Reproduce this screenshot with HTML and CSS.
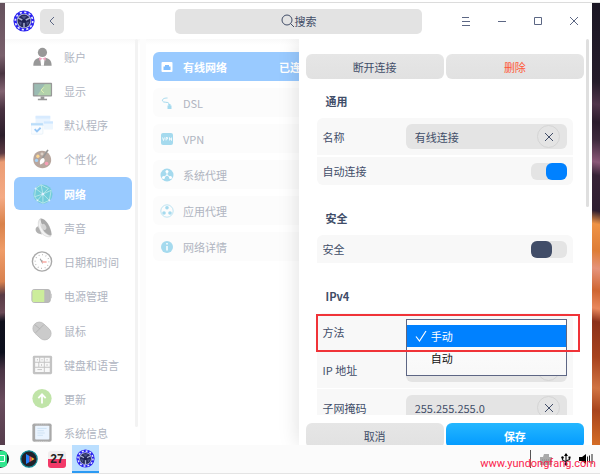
FILE: index.html
```html
<!DOCTYPE html>
<html lang="zh-CN">
<head>
    <meta charset="UTF-8">
    <meta name="viewport" content="width=device-width, initial-scale=1.0">
    <title>控制中心</title>
    <link rel="stylesheet" href="styles.css">
</head>
<body>

<svg class="sprite" aria-hidden="true">
    <symbol id="logo" viewBox="0 0 24 24">
        <circle cx="12" cy="12" r="11.5" fill="#2a22f0"/>
        <circle cx="12" cy="12" r="9.5" fill="none" stroke="#e6e9ff" stroke-width="1.8" stroke-dasharray="2.4 2.57"/>
        <circle cx="12" cy="12" r="8" fill="#b9c0da"/>
        <circle cx="12" cy="12" r="7" fill="#262a5c"/>
        <path d="M12 12 5.500 8.500M12 12l6.500-3.500M12 12v7" stroke="#aab2d0" stroke-width="1.600"/>
        <path d="M9 6.500h6l-3 3.500zM6 12.500l3.500 1-1 3.500zM18 12.500l-3.500 1 1 3.500z" fill="#4b5388"/>
        <circle cx="12" cy="12" r="2.300" fill="#1c2050"/>
    </symbol>
    <symbol id="cross" viewBox="0 0 10 10">
        <path d="M1 1l8 8M9 1l-8 8" fill="none" stroke="currentColor" stroke-width="1"/>
    </symbol>
</svg>

<div class="desktop">
    <div class="wallpaper wallpaper-left"></div>

    <div class="window">
        <header class="titlebar">
            <div class="titlebar-left">
                <svg class="logo"><use href="#logo"/></svg>
                <button class="back" aria-label="返回">
                    <svg width="6" height="10" viewBox="0 0 6 10"><path d="M5 1 1 5l4 4" fill="none" stroke="currentColor"/></svg>
                </button>
            </div>
            <button class="search">
                <svg width="14" height="14" viewBox="0 0 14 14"><circle cx="6" cy="6" r="5" fill="none" stroke="currentColor"/><path d="M9.500 9.500 13 13" stroke="currentColor"/></svg>
                搜索
            </button>
            <div class="titlebar-right">
                <button aria-label="菜单"><svg width="10" height="10" viewBox="0 0 10 10"><path d="M1 1.500h7M1 5.500h8M1 9.500h8" stroke="currentColor"/></svg></button>
                <button aria-label="最小化"><svg width="10" height="10" viewBox="0 0 10 10"><path d="M1 5.500h8" stroke="currentColor"/></svg></button>
                <button aria-label="最大化"><svg width="10" height="10" viewBox="0 0 10 10"><path d="M1.500 1.500h7v7h-7z" fill="none" stroke="currentColor"/></svg></button>
                <button aria-label="关闭"><svg width="10" height="10"><use href="#cross"/></svg></button>
            </div>
        </header>

        <div class="main">
            <nav class="sidebar">
                <a href="#" class="nav-item">
                    <svg viewBox="0 0 24 24"><circle cx="12.500" cy="7" r="5" fill="#333"/><path d="M2.500 21.500c0-6 3-8 6-8.500h8c3 .5 6 2.500 6 8.500z" fill="#333"/><path d="M10 13h5l-1 8.500h-3z" fill="#fff"/><path d="m9 12 3.500 2 3.500-2v4l-3.500-2L9 16z" fill="#e8508a"/></svg>
                    账户
                </a>
                <a href="#" class="nav-item">
                    <svg viewBox="0 0 24 24"><rect x="2" y="3" width="21" height="15" rx="1" fill="#333"/><path d="M3.500 4.500h18v12h-18z" fill="#397a68"/><path d="M7 16.500 15 4.500h6.500v12z" fill="#67a75a"/><path d="m14 8-3 3 3 3" fill="none" stroke="#cde86a"/><path d="M10.500 18h4v2.500h3V22h-10v-1.500h3z" fill="#333"/></svg>
                    显示
                </a>
                <a href="#" class="nav-item">
                    <svg viewBox="0 0 24 24"><rect x="5" y="2" width="16" height="11" rx="1" fill="#d5eaff"/><path d="M5 2h16v3H5z" fill="#b3d9ff"/><rect x="14" y="8" width="10" height="9" rx="1" fill="#dceefe"/><path d="M14 8h10v2.500H14z" fill="#a0d0ff"/><rect x="0" y="10" width="13" height="12" rx="1" fill="#f5faff" stroke="#b5d2ea" stroke-width=".5"/><path d="M0 10h13v2.500H0z" fill="#77bdf6"/><path d="m4 16.500 2.500 2.500 4-4" fill="none" stroke="#3191ef" stroke-width="2"/></svg>
                    默认程序
                </a>
                <a href="#" class="nav-item">
                    <svg viewBox="0 0 24 24"><path d="M12 3C6 3 2.500 7 2.500 12.500S7 22 12.500 22 22 18 22 13 18 3 12 3z" fill="#72503f"/><circle cx="7.500" cy="9" r="1.800" fill="#ffb32b"/><circle cx="12" cy="6.500" r="1.600" fill="#b9a391"/><circle cx="6" cy="13.500" r="1.800" fill="#50a4ed"/><circle cx="17" cy="17" r="2" fill="#ee4070"/><path d="m18.500 2-6.500 10" stroke="#333" stroke-width="1.800"/><path d="M13.500 11c3 2 1 6-3.500 7-1-3 0-6.500 3.500-7z" fill="#fff"/></svg>
                    个性化
                </a>
                <a href="#" class="nav-item active">
                    <svg viewBox="0 0 24 24"><circle cx="13" cy="12" r="10.500" fill="#62cdca"/><path d="m5 6 8 6 9-4M4 15l9-3-2-10 8 4-6 6 7 7-7 3V12l-6 7-3-4 1-9 6-4M7 19l6 3M20 19l2-11" fill="none" stroke="#c4f3df" stroke-width="1"/><g fill="#fff"><circle cx="13" cy="12" r="1.500"/><circle cx="5" cy="6" r="1"/><circle cx="20" cy="19" r="1"/><circle cx="7" cy="19" r="1"/></g></svg>
                    网络
                </a>
                <a href="#" class="nav-item">
                    <svg viewBox="0 0 24 24"><path d="M10 2C15 0 22 11 22.500 19c-1 3-5 2-8 0z" fill="#555"/><path d="M10 2C7 4 7 12 12 18c3 3 8 5 10 2.500C14 19 9 10 10 2z" fill="#e9e9e9" stroke="#999" stroke-width=".6"/><path d="M8 10c-4 1-4 6 0 8l4 1-4-8z" fill="#666"/><ellipse cx="14.500" cy="11" rx="2.500" ry="3.500" transform="rotate(-30 14 12)" fill="#aaa"/></svg>
                    声音
                </a>
                <a href="#" class="nav-item">
                    <svg viewBox="0 0 24 24"><circle cx="12" cy="11.500" r="10.500" fill="#fff" stroke="#555" stroke-width="1.500"/><circle cx="12" cy="11.500" r="7.500" fill="none" stroke="#555" stroke-width="1.200" stroke-dasharray=".8 3.127"/><path d="M10 8.500 12 12v-2" fill="none" stroke="#444" stroke-width="1.300"/><path d="M12 12h5" stroke="#f04a3c" stroke-width="1.500"/></svg>
                    日期和时间
                </a>
                <a href="#" class="nav-item">
                    <svg viewBox="0 0 24 24"><rect x="1" y="5" width="20" height="14" rx="2.500" fill="#777" stroke="#666"/><path d="M2.500 5.500h12v13h-12a1 1 0 0 1-1-1v-11a1 1 0 0 1 1-1z" fill="#9bdc3a"/><path d="M21.500 9.500h1v5h-1z" fill="#777"/></svg>
                    电源管理
                </a>
                <a href="#" class="nav-item">
                    <svg viewBox="0 0 24 24"><rect x="1" y="5" width="22" height="14" rx="7" transform="rotate(43 12 12)" fill="#999" stroke="#777" stroke-width=".8"/><path d="m5 14 9-9M4 5l6 5" fill="none" stroke="#666"/></svg>
                    鼠标
                </a>
                <a href="#" class="nav-item">
                    <svg viewBox="0 0 24 24"><rect x="2" y="2" width="21" height="20" rx="1.500" fill="#888"/><path d="M4.500 4h4.500v4.500H4.500zM10 4h4v4.500h-4zM15 4h5.500v4.500H15zM4.500 9.500H8V14H4.500zM9 9.500h5V14H9zM15 9.500h5.500V14H15zM4.500 15h9.500v4.500H4.500zM15 15h5.500v4.500H15z" fill="#f2f2f2"/><path d="M7 5.500v1.500M12 5.500v1.500M17.500 5.500v1.500M11.500 11v2M17.500 11v2M7 17h5" stroke="#888"/></svg>
                    键盘和语言
                </a>
                <a href="#" class="nav-item">
                    <svg viewBox="0 0 24 24"><circle cx="12" cy="11.500" r="10.500" fill="#82ca54"/><path d="M12 17V7M8 11l4-4 4 4" fill="none" stroke="#fff" stroke-width="2"/></svg>
                    更新
                </a>
                <a href="#" class="nav-item">
                    <svg viewBox="0 0 24 24"><rect x="1.500" y="1.500" width="21" height="20" rx="2" fill="#555"/><path d="M5 2h14M5 21.500h14" stroke="#bbb" stroke-dasharray="1 1"/><rect x="4.500" y="4" width="15.500" height="15" rx="1" fill="#d6eaff"/><path d="M7 7h10M7 9.500h7M7 12h8M7 14.500h6" stroke="#8bbbe4" stroke-width=".8"/></svg>
                    系统信息
                </a>
            </nav>
            <div class="sidebar-scroll"></div>

            <section class="content">
                <a href="#" class="net-item active">
                    <svg viewBox="0 0 14 14"><rect x="1.500" y="2" width="11" height="10" rx="1" fill="#fff"/><path d="M3.500 10V6.500H5V5h4v1.500h1.500V10z" fill="#80beff"/></svg>
                    <span>有线网络</span>
                    <em>已连接</em>
                </a>
                <a href="#" class="net-item">
                    <svg viewBox="0 0 14 14"><path d="M7.500 2C4 2 2 3 2.500 5s6 .5 6.500 2.500V9" fill="none" stroke="#a5daee"/><path d="M7.500 9.500h4V13h-4zM8.500 8h2v2h-2z" fill="#a5daee"/></svg>
                    <span>DSL</span>
                </a>
                <a href="#" class="net-item">
                    <svg viewBox="0 0 14 14"><rect x="1" y="1" width="12" height="12" rx="2" fill="#a5daee"/><path d="m2.500 5.500 1 3 1-3M6 8.500v-3h1.500V7H6M9.500 8.500v-3l2 3v-3" fill="none" stroke="#fff" stroke-width=".8"/></svg>
                    <span>VPN</span>
                </a>
                <a href="#" class="net-item">
                    <svg viewBox="0 0 14 14"><circle cx="7" cy="7" r="6.500" fill="#a5daee"/><path d="M7 7V3.500M7 7l-3.500 2.500M7 7l3.500 2.500" stroke="#fff"/><circle cx="7" cy="3.500" r="1.500" fill="#fff"/><circle cx="3.500" cy="9.500" r="1.500" fill="#fff"/><circle cx="10.500" cy="9.500" r="1.500" fill="#fff"/></svg>
                    <span>系统代理</span>
                </a>
                <a href="#" class="net-item">
                    <svg viewBox="0 0 14 14"><circle cx="7" cy="7" r="6.200" fill="none" stroke="#a5daee" stroke-width=".7"/><g fill="#a5daee"><circle cx="7" cy="3.800" r="1.800"/><circle cx="4" cy="9" r="1.800"/><circle cx="10" cy="9" r="1.800"/></g></svg>
                    <span>应用代理</span>
                </a>
                <a href="#" class="net-item">
                    <svg viewBox="0 0 14 14"><circle cx="7" cy="7" r="6" fill="#a5daee"/><path d="M7 6v4.500M7 3v1.500" fill="none" stroke="#fff" stroke-width="1.500"/></svg>
                    <span>网络详情</span>
                </a>
            </section>

            <form class="drawer">
                <div class="drawer-body">
                    <div class="button-row">
                        <button type="button" class="btn">断开连接</button>
                        <button type="button" class="btn danger">删除</button>
                    </div>

                    <h2>通用</h2>
                    <div class="group">
                        <div class="row">
                            <label for="name">名称</label>
                            <div class="field">
                                <input type="text" id="name" value="有线连接">
                                <button type="button" class="clear" aria-label="清除"><svg><use href="#cross"/></svg></button>
                            </div>
                        </div>
                        <div class="row row-switch">
                            <label for="auto">自动连接</label>
                            <input type="checkbox" class="switch" id="auto" checked>
                        </div>
                    </div>

                    <h2>安全</h2>
                    <div class="group group-open">
                        <div class="row row-switch">
                            <label for="security">安全</label>
                            <input type="checkbox" class="switch" id="security">
                        </div>
                    </div>

                    <h2>IPv4</h2>
                    <div class="group">
                        <div class="row highlighted">
                            <label for="method">方法</label>
                            <div class="field">
                                <select id="method">
                                    <option selected>手动</option>
                                    <option>自动</option>
                                </select>
                                <div class="menu" role="listbox" aria-label="方法">
                                    <button type="button" role="option" aria-selected="true" class="selected">
                                        <svg viewBox="0 0 12 12"><path d="m1 6.500 3.500 4.500L11 1" fill="none" stroke="#fff" stroke-width="1.200"/></svg>
                                        手动
                                    </button>
                                    <button type="button" role="option" aria-selected="false">自动</button>
                                </div>
                            </div>
                        </div>
                        <div class="row">
                            <label for="ip">IP 地址</label>
                            <div class="field">
                                <input type="text" id="ip">
                                <button type="button" class="clear" aria-label="清除"><svg><use href="#cross"/></svg></button>
                            </div>
                        </div>
                        <div class="row">
                            <label for="mask">子网掩码</label>
                            <div class="field">
                                <input type="text" id="mask" value="255.255.255.0">
                                <button type="button" class="clear" aria-label="清除"><svg><use href="#cross"/></svg></button>
                            </div>
                        </div>
                    </div>
                    <div class="drawer-scroll"></div>
                </div>
                <div class="drawer-footer button-row">
                    <button type="button" class="btn">取消</button>
                    <button type="submit" class="btn primary">保存</button>
                </div>
            </form>
        </div>
    </div>

    <div class="wallpaper wallpaper-right"></div>
</div>

<footer class="taskbar">
    <div class="dock">
        <svg class="app" viewBox="0 0 18 18"><circle cx="9" cy="9" r="9" fill="#152b2b"/><path d="M0 1h12a4 4 0 0 1 4 4v8a4 4 0 0 1-4 4H0z" fill="#30e58d"/><path d="M8 5.500h5.500v6H8" fill="none" stroke="#fff"/></svg>
        <svg class="app" viewBox="0 0 18 18"><circle cx="9" cy="9" r="8.200" fill="#20212b" stroke="#128b96" stroke-width="1.200"/><path d="M6 4v10l3.500-2V6z" fill="#2482ff"/><path d="m9.500 6 2 1v4l-2 1z" fill="#f34d63"/><path d="m11.500 7 3 2-3 2z" fill="#ffb62d"/></svg>
        <div class="calendar">27</div>
        <div class="app-active"><svg><use href="#logo"/></svg></div>
    </div>
    <div class="tray">
        <span class="tray-line"></span>
        <svg width="14" height="14" viewBox="0 0 14 14"><path d="M1 5h3l1-3h5v3h3v8H1z" fill="#aaa"/><path d="M3 8h8M3 10.500h8" stroke="#888" stroke-dasharray="1 1"/></svg>
        <svg width="10" height="14" viewBox="0 0 10 14"><path d="M5 2v10M1.500 5v3L5 10M8.500 5v2.500L5 9" fill="none" stroke="#222" stroke-width="1.200"/><path d="m3 4 2-3 2 3z"/><circle cx="5" cy="12" r="1.500"/><circle cx="1.500" cy="5.500" r="1.200"/><path d="M7.500 4.500h2v2h-2z"/></svg>
        <svg width="14" height="14" viewBox="0 0 14 14"><path d="M0 5h3l4-3v10L3 9H0z"/><path d="M8.500 4.500v5M10.500 3.500v7M13 2v10" stroke="#222"/></svg>
    </div>
    <a href="#" class="site">www.yundongfang.com</a>
</footer>

</body>
</html>
```

FILE: styles.css
```css
* { box-sizing: border-box; }
body { margin: 0; height: 100vh; overflow: hidden; display: flex; flex-direction: column; background-color: #fff; font-family: "Noto Sans CJK SC", "Noto Sans", sans-serif; font-size: 11px; line-height: 16px; color: #414d68; }
button, input, select { font: inherit; color: inherit; border: none; padding: 0; margin: 0; background: none; }
a { color: inherit; text-decoration: none; }
svg { display: block; flex-shrink: 0; }
.sprite { position: absolute; width: 0; height: 0; }

/* Escritorio */
.desktop { flex: 1; min-height: 0; display: flex; margin-top: 2px; border-top: 1px solid #dcdcdc; }
.wallpaper-left { width: 5px; background: linear-gradient(172deg, #65515c 0%, #79606c 12%, #4a3542 16%, #826371 20%, #493241 24%, #2c1e2b 30%, #5d3b43 34%, #eb9c74 36%, #f4aa84 44%, #d9824b 50%, #ef9c68 56%, #d8814f 63%, #593b46 66%, #6b4a57 70%, #10101c 72%, #0c0f1d 79%, #493444 83%, #694c5d 90%, #553d4c 100%); }
.wallpaper-right { width: 8px; background: linear-gradient(192deg, #1b1725 0%, #251c2a 18%, #50344a 23%, #2b1c2c 27%, #3e293c 31%, #8b5778 36%, #372236 39%, #2e1e30 47%, #ef9345 50%, #de7d36 56%, #e5937b 60%, #cf6531 65%, #e9885d 69%, #8c3019 72%, #a7421d 80%, #d07342 87%, #a8441c 92%, #d56d25 100%); }

/* Ventana */
.window { flex: 1; min-width: 0; display: flex; flex-direction: column; background-color: #fff; }
.titlebar { flex-shrink: 0; height: 36px; display: grid; grid-template-columns: 1fr 42% 1fr; align-items: center; color: #5c6784; }
.titlebar-left { display: flex; align-items: center; gap: 5px; padding-left: 8px; }
.logo { width: 22px; height: 22px; }
.back { width: 24px; height: 25px; border-radius: 5px; background-color: #e3e3e3; display: flex; align-items: center; justify-content: center; }
.search { height: 25px; border-radius: 5px; background-color: #e3e3e3; color: #414d68; display: flex; align-items: center; justify-content: center; }
.titlebar-right { display: flex; justify-content: flex-end; }
.titlebar-right button { width: 36px; height: 36px; display: flex; align-items: center; justify-content: center; }
.main { flex: 1; min-height: 0; display: flex; position: relative; overflow: hidden; background: linear-gradient(#f9f9f9, #fff 6px); }

/* Menu lateral */
.sidebar { width: 130px; padding: 1px 3px 0 9px; margin-bottom: -5px; display: grid; grid-template-rows: repeat(12, 1fr); row-gap: 1px; }
.nav-item { display: flex; align-items: center; gap: 10px; padding-left: 16px; border-radius: 6px; color: #b0b5c1; }
.nav-item svg { width: 24px; height: 24px; padding: 1px; opacity: 0.5; }
.nav-item.active { background-color: #99caff; color: #fff; font-weight: bold; }
.nav-item.active svg { opacity: 0.7; }
.sidebar-scroll { width: 3px; margin-bottom: 18px; border-radius: 2px; background-color: #f3f3f3; }

/* Lista de redes */
.content { flex: 1; min-width: 0; margin-left: 2px; border-left: 6px solid #fcfcfc; padding: 13px 7px 0; display: flex; flex-direction: column; gap: 7px; }
.net-item { height: 29px; display: flex; align-items: center; gap: 9px; padding-left: 7px; border-radius: 6px; background-color: #fcfcfc; color: #b0b5c1; }
.net-item svg { width: 14px; height: 14px; }
.net-item span { width: 87px; }
.net-item em { font-style: normal; }
.net-item.active { background-color: #99caff; color: #fff; font-weight: bold; }

/* Panel de conexion */
.drawer { position: absolute; top: 0; right: 0; bottom: 0; width: 50%; display: flex; flex-direction: column; background-color: #fff; box-shadow: 0 0 20px rgba(0, 0, 0, 0.13); }
.drawer-body { flex: 1; min-height: 0; overflow: hidden; padding-top: 15px; }
.button-row { display: flex; gap: 2px; padding: 0 8px 0 7px; }
.btn { flex: 1; height: 25px; border-radius: 6px; background: linear-gradient(#e6e6e6, #e1e1e1); text-align: center; }
.btn.danger { color: #ff5736; }
.btn.primary { background: linear-gradient(#25b7ff, #0098ff); color: #fff; font-weight: bold; }
h2 { margin: 25px 0 9px 27px; font-size: 11px; line-height: 16px; font-weight: bold; }
.button-row + h2 { margin-top: 14px; }
.group { margin: 0 19px 0 18px; }
.row { height: 37px; display: flex; align-items: center; justify-content: space-between; padding: 0 6px; background-color: #f8f8f8; }
.row + .row { margin-top: 1px; }
.row + .row-switch { margin-top: 2px; }
.row:first-child { border-radius: 6px 6px 0 0; }
.row:last-child { border-radius: 0 0 6px 6px; }
.group-open .row { border-radius: 6px 6px 0 0; }
.row-switch { height: 28px; }
.field { position: relative; width: 66%; height: 25px; display: flex; align-items: center; border-radius: 6px; background-color: #e4e4e4; padding: 0 7px 0 9px; }
.field input { flex: 1; min-width: 0; }
.field select { flex: 1; appearance: none; }
.clear { width: 23px; height: 23px; border: 1px solid #d4d4d4; border-radius: 50%; display: flex; align-items: center; justify-content: center; }
.clear svg { width: 10px; height: 10px; }
.switch { appearance: none; width: 36px; height: 17px; border-radius: 6px; background-color: #e4e4e4; display: flex; }
.switch::before { content: ""; width: 21px; height: 17px; border-radius: 6px; background-color: #414d68; }
.switch:checked { justify-content: flex-end; }
.switch:checked::before { background-color: #0081ff; }

/* Lista desplegable */
.menu { position: absolute; z-index: 1; top: 0; left: 0; right: 0; height: 57px; padding-top: 5px; border: 1px solid #5d6684; background: linear-gradient(#fff, #f8f8f8); display: flex; flex-direction: column; color: #111; }
.menu button { height: 22px; padding-left: 24px; display: flex; align-items: center; text-align: left; }
.menu .selected { gap: 4px; padding-left: 8px; background-color: #0081ff; color: #fff; }
.menu svg { width: 12px; height: 12px; }
.highlighted { position: relative; }
.highlighted::after { content: ""; position: absolute; z-index: 2; top: 1px; right: -7px; bottom: -2px; left: -1px; border: 2px solid #f03338; pointer-events: none; }
.drawer-scroll { position: absolute; top: 0; right: 3px; width: 3px; height: 168px; border-radius: 2px; background-color: #dfdfdf; }
.drawer-footer { height: 30px; padding-top: 8px; }

/* Barra de tareas */
.taskbar { position: relative; flex-shrink: 0; height: 29px; display: flex; justify-content: space-between; background-color: #fbfbfb; border-bottom: 1px solid #e4e4e4; }
.dock { display: flex; align-items: center; margin-left: -9px; }
.app { width: 18px; height: 18px; margin-right: 11px; }
.app + .app { margin-right: 10px; }
.calendar { width: 18px; height: 17px; margin-right: 6px; border-radius: 3px; background: linear-gradient(#f1eeee 50%, #f23a68 50%); font: bold 12px/17px "Liberation Sans", sans-serif; text-align: center; color: #222; }
.app-active { align-self: stretch; width: 27px; display: flex; align-items: center; justify-content: center; background-color: #bbdfff; border-bottom: 2px solid #2b9af3; }
.app-active svg { width: 19px; height: 19px; }
.tray { display: flex; align-items: center; gap: 8px; padding-right: 7px; }
.tray-line { width: 1px; height: 18px; background-color: #555; }
.site { position: absolute; right: 4px; bottom: 1px; font-family: Roboto, sans-serif; color: #fa1c4c; }
```
